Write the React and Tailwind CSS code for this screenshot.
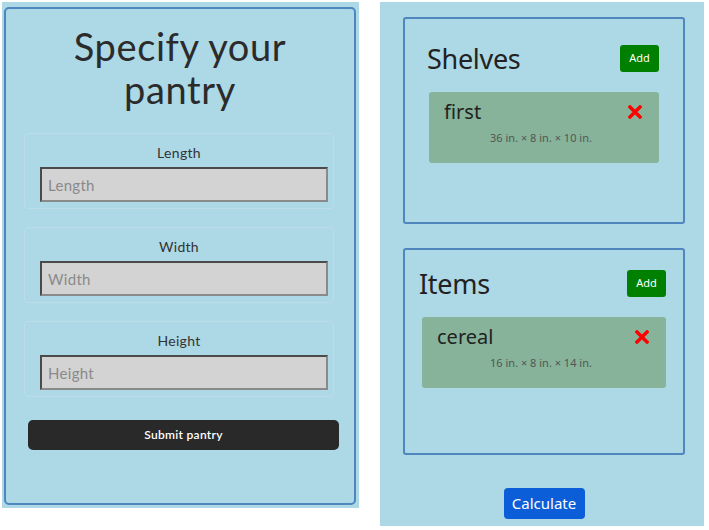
import React from "react";

const Field = ({ label }) => {
  return (
    <div className="w-[310px] h-[76px] ml-[18px] border border-[#bcdde8] rounded-[4px] pt-[9px]">
      <div className="text-center text-[14px] leading-[20px] text-[#333] tracking-[0.3px]">{label}</div>
      <input
        type="text"
        placeholder={label}
        className="block mt-[4px] ml-[15px] w-[288px] h-[35px] px-[6px] bg-[#d3d3d3] border-2 border-t-[#4a4a4a] border-l-[#4a4a4a] border-b-[#8a8a8a] border-r-[#8a8a8a] text-[15px] text-[#333] tracking-[0.3px] placeholder:text-[#8a8a8a] outline-none"
      />
    </div>
  );
};

const Cross = () => (
  <svg width="14" height="14" viewBox="0 0 14 14">
    <path d="M2 2 L12 12 M12 2 L2 12" stroke="#ff0000" strokeWidth="3.4" strokeLinecap="square" />
  </svg>
);

const Card = ({ name, dims }) => {
  return (
    <div className="h-[71px] bg-[#86b39a] rounded-[3px] pl-[15px] pr-[17px] pt-[8px]">
      <div className="flex justify-between items-center">
        <span className="text-[20px] leading-[24px] text-[#222]">{name}</span>
        <Cross />
      </div>
      <div className="text-center text-[11px] leading-[14px] text-[#555] mt-[7px] pr-[4px]">{dims}</div>
    </div>
  );
};

const Section = ({ title, name, dims, pad, top, shift }) => {
  return (
    <div className={`w-[282px] h-[207px] border-2 border-[#4f86bd] rounded-[3px] ${pad} ${top}`}>
      <div className="flex justify-between items-center h-[27px]">
        <span className={`text-[27px] leading-[32px] text-[#222] tracking-[-0.3px] ${shift}`}>{title}</span>
        <button className="w-[39px] h-[27px] bg-[#008000] text-white text-[11px] rounded-[3px]">Add</button>
      </div>
      <div className="mt-[20px]">
        <Card name={name} dims={dims} />
      </div>
    </div>
  );
};

export default function App() {
  return (
    <div className="flex bg-white w-[709px] h-[530px] pt-[2px] pl-[2px]" style={{ fontFamily: "'Noto Sans', sans-serif" }}>
      <div className="w-[357px] h-[506px] bg-[#add8e6] pl-[2px] pt-[5px]" style={{ fontFamily: "'Lato', sans-serif" }}>
        <div className="w-[352px] h-[498px] border-2 border-[#4f86bd] rounded-[5px] pt-[16px]">
          <h1 className="text-center text-[38px] leading-[43px] font-normal text-[#2b2b2b] tracking-[0.6px]">
            Specify your
            <br />
            pantry
          </h1>
          <div className="mt-[22px] flex flex-col gap-[18px]">
            <Field label="Length" />
            <Field label="Width" />
            <Field label="Height" />
          </div>
          <button className="block mt-[23px] ml-[22px] w-[311px] h-[30px] bg-[#292929] text-white text-[12px] font-semibold rounded-[5px] tracking-[0.3px]">
            Submit pantry
          </button>
        </div>
      </div>
      <div className="ml-[21px] w-[324px] h-[524px] bg-[#add8e6] pl-[23px] pt-[15px]">
        <Section title="Shelves" name="first" dims="36 in. × 8 in. × 10 in." pad="px-[24px]" top="pt-[26px]" shift="-ml-[2px]" />
        <div className="mt-[24px]">
          <Section title="Items" name="cereal" dims="16 in. × 8 in. × 14 in." pad="px-[17px]" top="pt-[20px]" shift="-ml-[3px]" />
        </div>
        <div className="w-[282px] flex justify-center mt-[33px]">
          <button className="w-[81px] h-[31px] bg-[#0b5ed7] text-white text-[15px] rounded-[4px]">Calculate</button>
        </div>
      </div>
    </div>
  );
}
